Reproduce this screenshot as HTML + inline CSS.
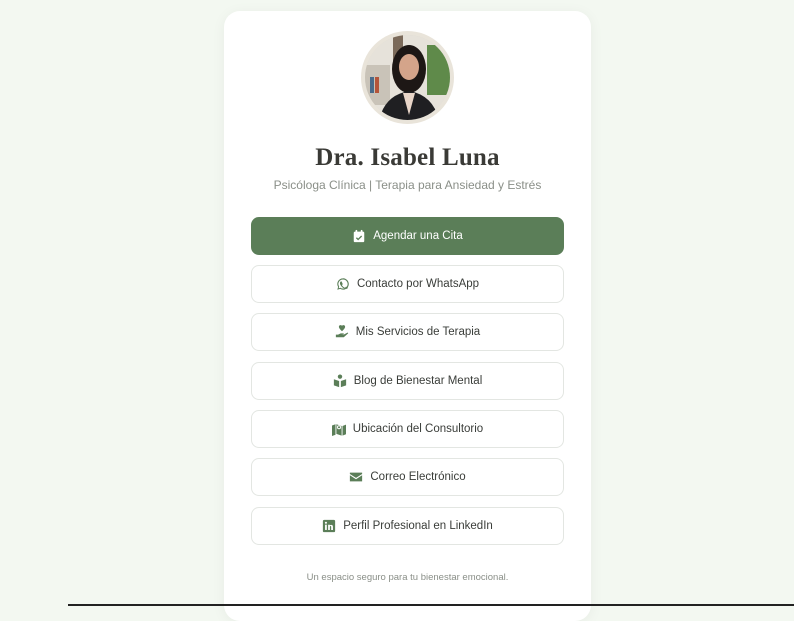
<!DOCTYPE html>
<html><head><meta charset="utf-8"><style>
*{box-sizing:border-box;margin:0;padding:0}
body{width:794px;height:606px;background:#f3f8f1;font-family:"Liberation Sans",sans-serif;position:relative;overflow:hidden}
.card{position:absolute;left:224px;top:11px;width:367px;height:610px;background:#fff;border-radius:16px;box-shadow:0 2px 14px rgba(0,0,0,0.05)}
.av{position:absolute;left:137px;top:20px;width:93px;height:93px;border-radius:50%;border:4px solid #e9e4da;overflow:hidden;background:#dcd8cf}
h1{position:absolute;top:133px;width:100%;text-align:center;font-family:"Liberation Serif",serif;font-size:25px;color:#3a3a36;font-weight:bold;letter-spacing:0.2px}
.sub{position:absolute;top:167px;width:100%;text-align:center;font-size:12px;color:#8a8f88}
.b{position:absolute;left:27px;width:313px;height:38px;border:1px solid #e3e6e2;border-radius:8px;display:flex;align-items:center;justify-content:center;font-size:11.5px;color:#3a3d39;gap:7px}
.b svg{width:14px;height:14px;fill:#5b7e58}
.p{background:#5b7e58;border-color:#5b7e58;color:#fff}
.p svg{fill:#fff}
.f{position:absolute;top:561px;width:100%;text-align:center;font-size:9.5px;color:#8a8f88}
.bar{position:absolute;left:68px;top:604px;width:726px;height:2px;background:#222}
</style></head><body>
<div class="card">
<div class="av"><svg width="85" height="85" viewBox="0 0 85 85">
<rect width="85" height="85" fill="#e6e2da"/><rect x="0" y="30" width="25" height="40" fill="#c9c3b8"/><rect x="5" y="42" width="4" height="16" fill="#4a6b8a"/><rect x="10" y="42" width="4" height="16" fill="#b5553a"/><rect x="28" y="0" width="10" height="30" fill="#7b6a5a"/><rect x="62" y="10" width="23" height="50" fill="#5f8a4a"/>
<ellipse cx="44" cy="34" rx="17" ry="24" fill="#1d1715"/><ellipse cx="44" cy="32" rx="10" ry="13" fill="#d4a48a"/><path d="M14 85 Q20 60 44 56 Q68 60 74 85Z" fill="#1f1f22"/><path d="M38 58 L44 80 L50 58Z" fill="#e8d5c8"/></svg></div>
<h1>Dra. Isabel Luna</h1>
<div class="sub">Psicóloga Clínica | Terapia para Ansiedad y Estrés</div>
<div class="b p" style="top:206px"><svg viewBox="0 0 16 16"><rect x="2" y="3" width="12" height="12" rx="1.5"/><rect x="4" y="1" width="2" height="4" rx="1"/><rect x="10" y="1" width="2" height="4" rx="1"/><path d="M5 10l2 2 4-4" stroke="#5b7e58" stroke-width="1.5" fill="none"/></svg>Agendar una Cita</div>
<div class="b" style="top:254px"><svg viewBox="0 0 16 16"><path d="M8 1.5a6.5 6.5 0 0 0-5.6 9.8L1.5 14.5l3.3-.9A6.5 6.5 0 1 0 8 1.5zm0 1.3a5.2 5.2 0 1 1-2.7 9.6l-.2-.1-2 .5.5-1.9-.1-.2A5.2 5.2 0 0 1 8 2.8zM6 5c-.2 0-.5 0-.7.3-.3.3-.8.8-.8 1.9s.8 2.2.9 2.3c.1.2 1.6 2.6 4 3.5 1.9.7 2.3.6 2.7.5.4 0 1.3-.5 1.5-1.100-.1-.3-.2-.4-.4-.5l-1.5-.7c-.2-.1-.4-.1-.5.1l-.7.8c-.1.1-.3.2-.5.1-.2-.1-1-.4-1.800-1.1-.7-.6-1.100-1.3-1.3-1.5-.1-.2 0-.4.1-.5l.4-.5.2-.4v-.4L6.5 5.3C6.4 5 6.2 5 6 5z"/></svg>Contacto por WhatsApp</div>
<div class="b" style="top:302px"><svg viewBox="0 0 16 16"><path d="M8 1c1-1.5 4-1 3.5 1.5C11 4.5 8 7 8 7S5 4.5 4.5 2.5C4 0 7-.5 8 1z"/><path d="M1 11h2.5l3-1.5h3c.8 0 .8 1.2 0 1.2H7l3 .3 4-2.2c.8-.4 1.4.6.7 1.1L10 14H1z"/></svg>Mis Servicios de Terapia</div>
<div class="b" style="top:351px"><svg viewBox="0 0 16 16"><circle cx="8" cy="3" r="2.5"/><path d="M1 6l6 2v7l-6-2zM15 6l-6 2v7l6-2z"/></svg>Blog de Bienestar Mental</div>
<div class="b" style="top:399px"><svg viewBox="0 0 16 16"><path d="M0 4l4-1.5v12L0 16zM5 2.5l6 2v11l-6-2zM12 4.5l4-1.5v11l-4 1.5z"/><circle cx="8" cy="6" r="2.3" fill="#fff"/><circle cx="8" cy="6" r="1.2"/></svg>Ubicación del Consultorio</div>
<div class="b" style="top:447px"><svg viewBox="0 0 16 16"><path d="M1 3h14v1.5L8 9 1 4.5z"/><path d="M1 6l7 4.5L15 6v7H1z"/></svg>Correo Electrónico</div>
<div class="b" style="top:496px"><svg viewBox="0 0 16 16"><rect x="1" y="1" width="14" height="14" rx="1.5"/><rect x="3.5" y="6.5" width="2" height="6" fill="#fff"/><circle cx="4.5" cy="4.3" r="1.2" fill="#fff"/><path d="M7 6.5h2v1c.5-1 3.5-1.5 3.5 1.3v3.7h-2V9c0-1.3-1.5-1.3-1.5 0v3.5H7z" fill="#fff"/></svg>Perfil Profesional en LinkedIn</div>
<div class="f">Un espacio seguro para tu bienestar emocional.</div>
</div>
<div class="bar"></div>
</body></html>
